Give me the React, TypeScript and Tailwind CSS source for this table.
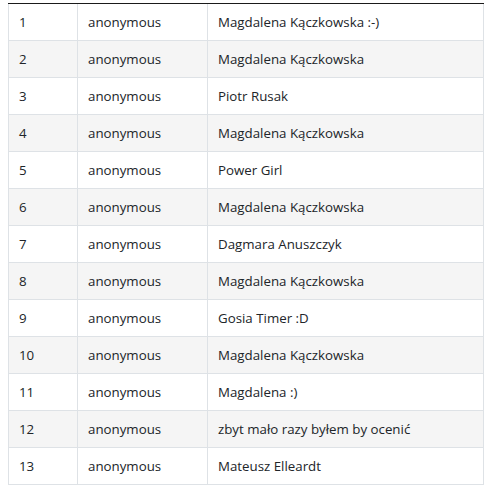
import React from "react";

const rows: [string, string, string][] = [
  ["1", "anonymous", "Magdalena Kączkowska :-)"],
  ["2", "anonymous", "Magdalena Kączkowska"],
  ["3", "anonymous", "Piotr Rusak"],
  ["4", "anonymous", "Magdalena Kączkowska"],
  ["5", "anonymous", "Power Girl"],
  ["6", "anonymous", "Magdalena Kączkowska"],
  ["7", "anonymous", "Dagmara Anuszczyk"],
  ["8", "anonymous", "Magdalena Kączkowska"],
  ["9", "anonymous", "Gosia Timer :D"],
  ["10", "anonymous", "Magdalena Kączkowska"],
  ["11", "anonymous", "Magdalena :)"],
  ["12", "anonymous", "zbyt mało razy byłem by ocenić"],
  ["13", "anonymous", "Mateusz Elleardt"],
];

function Cell({ first, className, children }: { first: boolean; className?: string; children: React.ReactNode }) {
  return (
    <td
      className={
        "border border-[#dee2e6] px-[10px] py-0 leading-[20px] " +
        (first ? "border-t-0 h-[36px] " : "h-[37px] ") +
        (className ?? "")
      }
    >
      {children}
    </td>
  );
}

export default function App() {
  return (
    <div className="bg-white w-[487px] h-[492px] pt-[3px] pl-[8px] text-[#212529] font-['Open_Sans',sans-serif] text-[13.3px]">
      <div className="w-[476px] h-px bg-[#1a1a1a]" />
      <table className="border-collapse w-[476px]">
        <tbody>
          {rows.map((r, i) => (
            <tr key={i} className={i % 2 === 1 ? "bg-[#f5f5f5]" : "bg-white"}>
              <Cell first={i === 0} className="w-[69px]">{r[0]}</Cell>
              <Cell first={i === 0} className="w-[130px]">{r[1]}</Cell>
              <Cell first={i === 0}>{r[2]}</Cell>
            </tr>
          ))}
        </tbody>
      </table>
    </div>
  );
}
